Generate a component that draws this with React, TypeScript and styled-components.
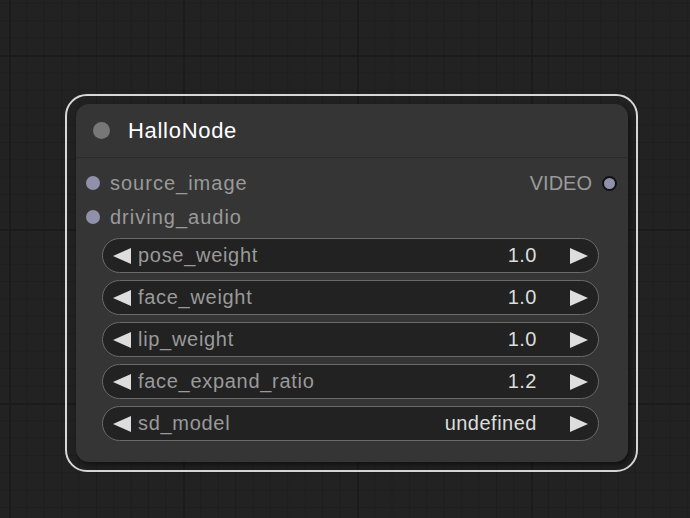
import React from "react";
import styled, { createGlobalStyle } from "styled-components";

const GlobalStyle = createGlobalStyle`
  html, body {
    margin: 0;
    padding: 0;
    width: 690px;
    height: 518px;
    overflow: hidden;
  }
  body {
    background-color: #222222;
    background-image:
      linear-gradient(to right, #1b1b1b 0, #1b1b1b 2px, transparent 2px),
      linear-gradient(to bottom, #1b1b1b 0, #1b1b1b 2px, transparent 2px),
      linear-gradient(to right, #1e1e1e 0, #1e1e1e 1px, transparent 1px),
      linear-gradient(to bottom, #1e1e1e 0, #1e1e1e 1px, transparent 1px);
    background-size: 174px 174px, 174px 174px, 17.4px 17.4px, 17.4px 17.4px;
    background-position: 9px 0, 0 55px, 9px 0, 0 55px;
    font-family: "Liberation Sans", Arial, sans-serif;
  }
`;

const Canvas = styled.div`
  position: relative;
  width: 690px;
  height: 518px;
`;

const Selection = styled.div<{ $x: number; $y: number }>`
  position: absolute;
  left: ${(p) => p.$x}px;
  top: ${(p) => p.$y}px;
  border: 2px solid #d8d8d8;
  border-radius: 22px;
  padding: 8px 8px 8px 9px;
`;

const Node = styled.div`
  width: 552px;
  background: #353535;
  border-radius: 13px;
  box-shadow: 2px 3px 6px rgba(0, 0, 0, 0.5);
  padding-bottom: 21px;
`;

const Header = styled.div`
  height: 53px;
  display: flex;
  align-items: center;
  gap: 18px;
  padding-left: 17px;
  border-bottom: 1px solid #2b2b2b;
`;

const TitleDot = styled.span`
  width: 17px;
  height: 17px;
  border-radius: 50%;
  background: #777777;
`;

const Title = styled.span`
  color: #ffffff;
  font-size: 22px;
  letter-spacing: 0.7px;
`;

const Slots = styled.div`
  display: grid;
  grid-template-columns: 1fr auto;
  padding: 8px 11px 4px 10px;
`;

const SlotRow = styled.div<{ $right?: boolean }>`
  height: 34px;
  display: flex;
  align-items: center;
  justify-content: ${(p) => (p.$right ? "flex-end" : "flex-start")};
  gap: 10px;
  color: #9a9a9a;
  font-size: 20px;
  letter-spacing: ${(p) => (p.$right ? 0 : 1)}px;
`;

const SlotDot = styled.span<{ $outlined?: boolean }>`
  width: ${(p) => (p.$outlined ? 11 : 14)}px;
  height: ${(p) => (p.$outlined ? 11 : 14)}px;
  border-radius: 50%;
  background: #9090aa;
  border: ${(p) => (p.$outlined ? "2px solid #111" : "none")};
`;

const Widgets = styled.div`
  display: flex;
  flex-direction: column;
  gap: 7px;
  padding: 0 29px 0 26px;
`;

const Widget = styled.div`
  height: 33px;
  display: flex;
  align-items: center;
  background: #222222;
  border: 1px solid #6a6a6a;
  border-radius: 18px;
  padding: 0 10px;
  font-size: 20px;
`;

const Arrow = styled.svg`
  width: 18px;
  height: 16px;
  flex: none;
`;

const Label = styled.span`
  flex: 1;
  color: #9a9a9a;
  margin-left: 7px;
  letter-spacing: 0.7px;
`;

const Value = styled.span`
  color: #dddddd;
  margin-right: 33px;
  letter-spacing: 0.5px;
`;

function LeftArrow() {
  return (
    <Arrow viewBox="0 0 18 16">
      <polygon points="18,0 18,16 0,8" fill="#dddddd" />
    </Arrow>
  );
}

function RightArrow() {
  return (
    <Arrow viewBox="0 0 18 16">
      <polygon points="0,0 0,16 18,8" fill="#dddddd" />
    </Arrow>
  );
}

const widgets = [
  { name: "pose_weight", value: "1.0" },
  { name: "face_weight", value: "1.0" },
  { name: "lip_weight", value: "1.0" },
  { name: "face_expand_ratio", value: "1.2" },
  { name: "sd_model", value: "undefined" },
];

export default function App() {
  return (
    <>
      <GlobalStyle />
      <Canvas>
        <Selection $x={65} $y={94}>
          <Node>
            <Header>
              <TitleDot />
              <Title>HalloNode</Title>
            </Header>
            <Slots>
              <SlotRow>
                <SlotDot />
                source_image
              </SlotRow>
              <SlotRow $right>
                VIDEO
                <SlotDot $outlined />
              </SlotRow>
              <SlotRow>
                <SlotDot />
                driving_audio
              </SlotRow>
            </Slots>
            <Widgets>
              {widgets.map((w) => (
                <Widget key={w.name}>
                  <LeftArrow />
                  <Label>{w.name}</Label>
                  <Value>{w.value}</Value>
                  <RightArrow />
                </Widget>
              ))}
            </Widgets>
          </Node>
        </Selection>
      </Canvas>
    </>
  );
}
